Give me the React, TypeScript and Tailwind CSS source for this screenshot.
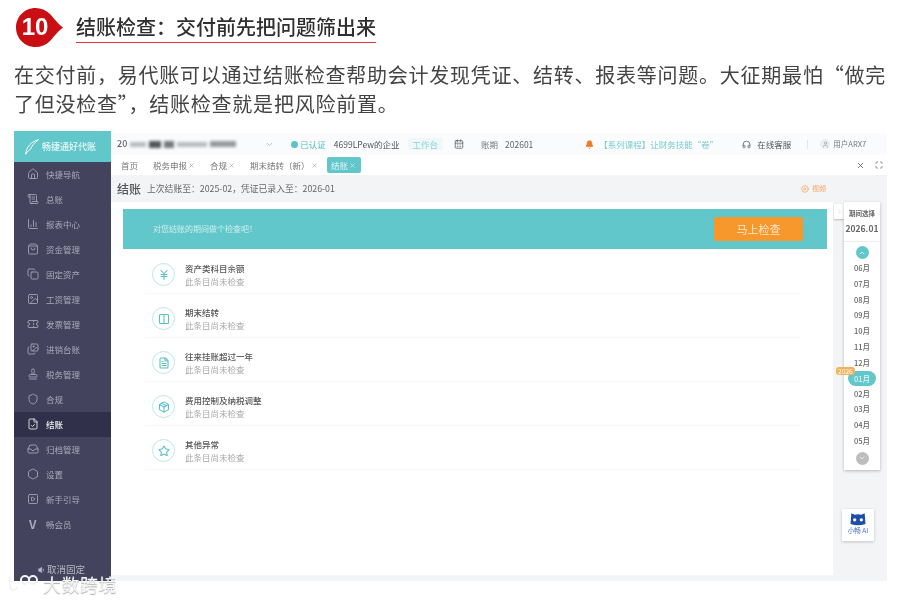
import { Home, ScrollText, ChartColumn, ShoppingBag, Copy, Image, Ticket, Images, Stamp, Shield, FileCheck, Inbox, Hexagon, SquarePlay, ChevronDown, ChevronUp, ChevronRight, CalendarDays, Bell, Headphones, User, X, Maximize, CirclePlay, JapaneseYen, Columns2, FileText, Package, Star, Volume1 } from "lucide-react";

const menu = [
  ["快捷导航", Home],
  ["总账", ScrollText],
  ["报表中心", ChartColumn],
  ["资金管理", ShoppingBag],
  ["固定资产", Copy],
  ["工资管理", Image],
  ["发票管理", Ticket],
  ["进销台账", Images],
  ["税务管理", Stamp],
  ["合规", Shield],
  ["结账", FileCheck],
  ["归档管理", Inbox],
  ["设置", Hexagon],
  ["新手引导", SquarePlay],
] as const;

const checks = [
  ["资产类科目余额", JapaneseYen],
  ["期末结转", Columns2],
  ["往来挂账超过一年", FileText],
  ["费用控制及纳税调整", Package],
  ["其他异常", Star],
] as const;

const before = ["06月", "07月", "08月", "09月", "10月", "11月", "12月"];
const after = ["02月", "03月", "04月", "05月"];

function Tab({ label, className = "" }: { label: string; className?: string }) {
  return (
    <span className={"flex items-center gap-[1px] text-[8.5px] text-[#777] " + className}>
      {label}
      <X size={7} strokeWidth={1.5} />
    </span>
  );
}

export default function App() {
  return (
    <div className="relative flex h-[601px] w-[900px] flex-col overflow-hidden bg-white font-['Noto_Sans_CJK_SC',sans-serif]">
      <header className="flex h-[52px] items-start pl-[16px] pt-[8px]">
        <div className="relative h-[39px] w-[47px] shrink-0 blur-[0.3px]">
          <svg viewBox="0 0 47 39" className="h-full w-full">
            <path d="M19.500 0C25 0 30 2 34 6C37 9 40 14 47 19.500C40 25 37 30 34 33C30 37 25 39 19.500 39C8.700 39 0 30.300 0 19.500C0 8.700 8.700 0 19.500 0Z" fill="#c90f14" />
          </svg>
          <span className="absolute left-0 top-[4px] w-[38px] text-center font-['Liberation_Sans',sans-serif] text-[24px] font-bold leading-[30px] text-white">10</span>
        </div>
        <div className="ml-[13px] mt-[5px] w-[300px] whitespace-nowrap border-b-[1.500px] border-[#d9373b] pb-[2px] text-[20px] font-medium leading-[27px] text-[#2f2f2f] blur-[0.3px]">
          {"结账检查\uFF1A交付前先把问题筛出来"}
        </div>
      </header>

      <p className="mt-[8px] h-[58px] w-[890px] pl-[14px] text-[20px] leading-[29px] tracking-[0.76px] text-[#444] blur-[0.3px]">
        {"在交付前\uFF0C易代账可以通过结账检查帮助会计发现凭证、结转、报表等问题。大征期最怕“做完了但没检查”\uFF0C结账检查就是把风险前置。"}
      </p>

      <div className="ml-[14px] mt-[13px] flex h-[450px] w-[873px] bg-white text-[#555]">
        <aside className="flex w-[97px] shrink-0 flex-col bg-[#43435e]">
          <div className="flex h-[31px] items-center gap-[2px] bg-[#62c7ca] pl-[10px] text-[9px] font-medium text-[#e9f7f7] blur-[0.5px]">
            <svg viewBox="0 0 20 20" className="h-[16px] w-[16px]" fill="none" stroke="#fff" strokeWidth="1.200">
              <path d="M2 19C3 10 9 3 18 1C13 5 10 8 8 13C6 14 5 15 2 19Z" />
            </svg>
            畅捷通好代账
          </div>
          <div className="flex flex-col blur-[0.5px]">
            {menu.map(([label, Icon]) => (
              <div key={label} className={"flex h-[25px] items-center gap-[7px] pb-[1px] pl-[13px] text-[8.5px] " + (label === "结账" ? "bg-[#30304a] font-medium text-[#f2f2f6]" : "text-[#a9a9ba]")}>
                <Icon size={12} strokeWidth={1.7} />
                {label}
              </div>
            ))}
            <div className="flex h-[25px] items-center gap-[8px] pb-[1px] pl-[15px] text-[8.5px] text-[#a9a9ba]">
              <span className="w-[9px] text-[12px] font-bold leading-none">V</span>
              畅会员
            </div>
          </div>
          <div className="mt-auto flex h-[22px] items-center justify-center gap-[1px] pr-[2px] text-[9.5px] leading-none text-[#b8b8c6] blur-[0.5px]">
            <Volume1 size={8} fill="currentColor" />
            取消固定
          </div>
        </aside>

        <main className="flex min-w-0 flex-1 flex-col">
          <div className="mt-[2px] flex h-[22px] items-center bg-[#fafbfc] pl-[6px] text-[8.5px] text-[#666] blur-[0.3px]">
            <span className="text-[9px] font-medium">20</span>
            <span className="ml-[3px] flex h-[8px] w-[115px] items-center gap-[3px] blur-[1.500px]">
              <span className="h-[5px] w-[16px] bg-[#bbb]" />
              <span className="h-[7px] w-[12px] bg-[#555]" />
              <span className="h-[7px] w-[10px] bg-[#777]" />
              <span className="h-[5px] w-[30px] bg-[#bbb]" />
              <span className="h-[6px] w-[26px] bg-[#999]" />
            </span>
            <ChevronDown size={9} className="ml-[20px] text-[#aaa]" />
            <span className="ml-[17px] h-[7px] w-[7px] rounded-full bg-[#5cc3c7]" />
            <span className="ml-[2px] text-[#4dbcc0]">已认证</span>
            <span className="ml-[8px] text-[#555]">4699LPew的企业</span>
            <span className="ml-[8px] rounded-[2px] bg-[#eef8f8] px-[5px] text-[#8ed3d6]">工作台</span>
            <CalendarDays size={10} className="ml-[11px] text-[#666]" />
            <span className="ml-[17px] text-[#777]">账期</span>
            <span className="ml-[7px] text-[#666]">202601</span>
            <Bell size={9} fill="#ee7a22" className="ml-[52px] text-[#ee7a22]" />
            <span className="ml-[5px] w-[143px] truncate text-[8.5px] text-[#78cdd0]">【系列课程】让财务技能“卷”</span>
            <Headphones size={9} className="text-[#555]" />
            <span className="ml-[6px] text-[#555]">在线客服</span>
            <span className="ml-[16px] h-[9px] w-px bg-[#e5e5e5]" />
            <span className="ml-[12px] flex h-[10px] w-[10px] items-center justify-center rounded-full bg-[#eee]"><User size={7} className="text-[#999]" /></span>
            <span className="ml-[3px] text-[7.500px] text-[#777]">用户ARX7</span>
          </div>

          <div className="flex h-[20px] items-center bg-white pl-[10px] pr-[4px] blur-[0.3px]">
            <span className="text-[8.5px] text-[#777]">首页</span>
            <Tab label="税务申报" className="ml-[15px]" />
            <Tab label="合规" className="ml-[15px]" />
            <Tab label={"期末结转\uFF08新\uFF09"} className="ml-[15px]" />
            <span className="ml-[9px] flex h-[16px] w-[34px] items-center justify-center gap-[1px] rounded-[2px] bg-[#62c7ca] text-[8.5px] text-[#dff4f4]">
              结账<X size={7} />
            </span>
            <X size={9} className="ml-auto text-[#555]" />
            <Maximize size={8} className="ml-[10px] text-[#666]" />
          </div>

          <div className="flex h-[27px] items-center bg-[#f3f4f6] pl-[6px] pr-[61px] blur-[0.3px]">
            <span className="text-[12px] font-medium text-[#555]">结账</span>
            <span className="ml-[6px] text-[8.8px] text-[#666]">{"上次结账至\uFF1A2025-02\uFF0C凭证已录入至\uFF1A2026-01"}</span>
            <CirclePlay size={8} className="ml-auto text-[#f0a050]" />
            <span className="ml-[3px] text-[7px] text-[#f0a868]">视频</span>
          </div>

          <div className="flex min-h-0 flex-1 bg-[#f3f4f6]">
            <section className="mb-[6px] flex w-[722px] flex-col bg-white pl-[12px] blur-[0.3px]">
              <div className="mt-[7px] flex h-[40px] w-[704px] items-center justify-between bg-[#62c7ca] pl-[30px] pr-[24px]">
                <span className="text-[8px] text-[#cdeeee]">{"对您结账的期间做个检查吧\uFF01"}</span>
                <button className="h-[24px] w-[89px] rounded-[2px] bg-[#f7982c] text-[11px] text-[#fde9d0]">马上检查</button>
              </div>
              <div className="mt-[1px] flex w-[678px] flex-col pl-[22px]">
                {checks.map(([title, Icon]) => (
                  <div key={title} className="flex h-[44px] items-center border-b border-[#f7f8f9] pl-[7px] pt-[6px]">
                    <span className="flex h-[23px] w-[23px] items-center justify-center rounded-full border-[1.500px] border-[#bce8ea] text-[#57c1c6]">
                      <Icon size={12} strokeWidth={2.2} />
                    </span>
                    <div className="ml-[10px] flex flex-col">
                      <span className="text-[8.5px] font-medium leading-[13px] text-[#555]">{title}</span>
                      <span className="text-[8.5px] leading-[13px] text-[#a8a8a8]">此条目尚未检查</span>
                    </div>
                  </div>
                ))}
              </div>
            </section>

            <aside className="flex flex-1 flex-col pl-[1px]">
              <div className="flex items-start">
                <span className="mt-[2px] flex h-[15px] w-[10px] items-center justify-center rounded-l-[1px] bg-white text-[#ccc] shadow-[0_1px_2px_#bbb]">
                  <ChevronRight size={7} />
                </span>
                <div className="flex h-[268px] w-[36px] flex-col items-center bg-white shadow-[0_1px_3px_rgba(0,0,0,0.25)] blur-[0.3px]">
                  <span className="mt-[6px] text-[6.500px] font-bold leading-[10px] text-[#666]">期间选择</span>
                  <span className="mt-[4px] h-[20px] w-full border-b border-[#eee] text-center text-[8.500px] font-bold leading-[12px] text-[#666]">2026.01</span>
                  <span className="mt-[4px] flex h-[13px] w-[13px] items-center justify-center rounded-full bg-[#62c7ca] text-white"><ChevronUp size={8} /></span>
                  <div className="mt-[1px] flex flex-col items-center">
                    {before.map((m) => (
                      <span key={m} className="h-[15.800px] text-[7.500px] font-medium leading-[16px] text-[#666]">{m}</span>
                    ))}
                    <span className="relative h-[15px] w-[28px] rounded-full bg-[#62c7ca] text-center text-[7.500px] font-medium leading-[15px] text-[#e4f7f7]">
                      01月
                      <span className="absolute -left-[12px] -top-[4px] rounded-[3px] bg-[#f2b25d] px-[2px] text-[6.500px] leading-[8px] text-[#fff3df]">2026</span>
                    </span>
                    {after.map((m) => (
                      <span key={m} className="h-[15.800px] text-[7.500px] font-medium leading-[16px] text-[#666]">{m}</span>
                    ))}
                  </div>
                  <span className="mt-[3px] flex h-[13px] w-[13px] items-center justify-center rounded-full bg-[#bdbdbd] text-white"><ChevronDown size={8} /></span>
                </div>
              </div>
              <div className="ml-[8px] mt-[39px] flex h-[32px] w-[32px] flex-col items-center bg-white pt-[3px] shadow-[0_1px_3px_rgba(0,0,0,0.2)] blur-[0.3px]">
                <svg viewBox="0 0 24 16" className="h-[14px] w-[20px]">
                  <path d="M4 1L8 3C11 2 13 2 16 3L20 1L21 14C15 16 9 16 3 14Z" fill="#1d4fa8" />
                  <circle cx="8" cy="9" r="2" fill="#fff" />
                  <circle cx="16" cy="9" r="2" fill="#fff" />
                </svg>
                <span className="text-[6.500px] leading-[9px] text-[#3f6fc0]">小畅 AI</span>
              </div>
            </aside>
          </div>
        </main>
      </div>

      <div className="absolute bottom-[8px] left-[8px] flex items-center gap-[5px] blur-[0.3px]">
        <svg viewBox="0 0 30 18" className="h-[18px] w-[30px]" fill="none" stroke="#f4f4f4" strokeWidth="2">
          <path d="M2 2V12C2 16 8 16 9 12" />
          <circle cx="17" cy="5" r="4" />
          <circle cx="25" cy="5" r="4" />
        </svg>
        <span className="text-[18px] leading-[18px] tracking-[0.5px] text-[#f4f4f4] [text-shadow:0_1px_1px_#aaa]">大数跨境</span>
      </div>
    </div>
  );
}
